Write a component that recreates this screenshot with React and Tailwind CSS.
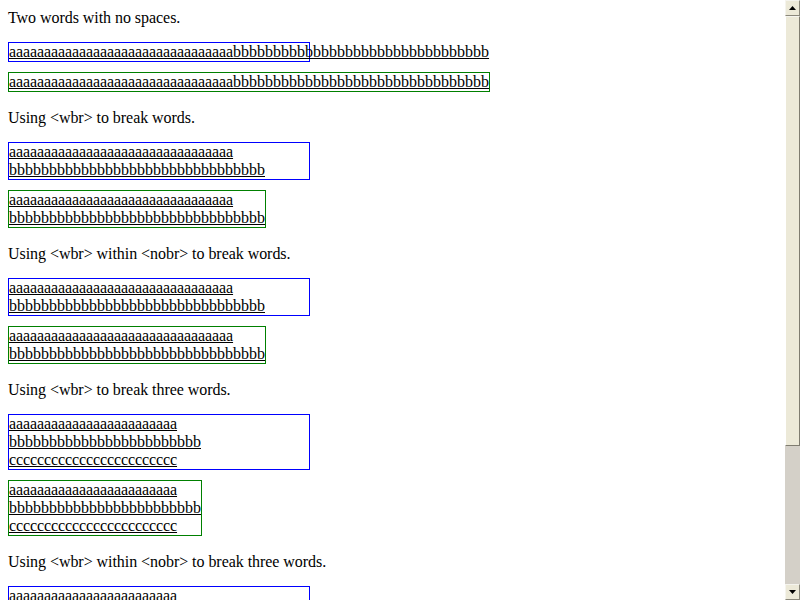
import React from "react";

const A = (n) => "a".repeat(n);
const B = (n) => "b".repeat(n);
const C = (n) => "c".repeat(n);

function Ln({ children, narrow }) {
  return (
    <div className="whitespace-nowrap">
      <span className={"underline decoration-black " + (narrow ? "tracking-[-0.1px]" : "")}>{children}</span>
    </div>
  );
}

function TwoLine({ border }) {
  return (
    <div className={border}>
      <Ln narrow>{A(32)}</Ln>
      <Ln>{B(32)}</Ln>
    </div>
  );
}

function ThreeLine({ border }) {
  return (
    <div className={border}>
      <Ln narrow>{A(24)}</Ln>
      <Ln>{B(24)}</Ln>
      <Ln narrow>{C(24)}</Ln>
    </div>
  );
}

function Section({ title, children, first }) {
  return (
    <div className={first ? "" : "mt-4"}>
      <div className="whitespace-nowrap pt-px tracking-[-0.05px]">{title}</div>
      {children}
    </div>
  );
}

function Scrollbar() {
  return (
    <div className="flex h-[600px] w-[15px] shrink-0 flex-col bg-[#d4d0c8]">
      <div className="flex h-[16px] items-center justify-center border-t border-l border-r border-b border-t-[#f5f4ee] border-l-[#f5f4ee] border-r-[#8a877b] border-b-[#8a877b] bg-[#ece9d8]">
        <svg width="7" height="4" viewBox="0 0 7 4">
          <path d="M3.5 0 L7 4 L0 4 Z" fill="#000" />
        </svg>
      </div>
      <div className="h-[430px] border-t border-l border-r border-b border-t-[#f5f4ee] border-l-white border-r-[#7f7c70] border-b-[#7f7c70] bg-[#ece9d8]" />
      <div className="flex-1" />
      <div className="flex h-[16px] items-center justify-center border-t border-l border-r border-b border-t-[#f5f4ee] border-l-[#f5f4ee] border-r-[#8a877b] border-b-[#8a877b] bg-[#ece9d8]">
        <svg width="7" height="4" viewBox="0 0 7 4">
          <path d="M0 0 L7 0 L3.5 4 Z" fill="#000" />
        </svg>
      </div>
    </div>
  );
}

export default function App() {
  const blue = "mt-[15px] w-[302px] border border-[#0000ff]";
  const green = "mt-[10px] w-fit border border-[#008000]";
  return (
    <div className="flex h-[600px] w-[800px] overflow-hidden bg-white">
      <div
        className="min-w-0 flex-1 overflow-hidden p-2 text-[16px] leading-[18px] text-black"
        style={{ fontFamily: '"Liberation Serif", "Times New Roman", serif' }}
      >
        <Section title="Two words with no spaces." first>
          <div className={blue}>
            <div className="whitespace-nowrap">
              <span className="underline decoration-black">
                <span className="tracking-[-0.1px]">{A(32)}</span>
                {B(32)}
              </span>
            </div>
          </div>
          <div className={green}>
            <div className="whitespace-nowrap">
              <span className="underline decoration-black">
                <span className="tracking-[-0.1px]">{A(32)}</span>
                {B(32)}
              </span>
            </div>
          </div>
        </Section>
        <Section title="Using <wbr> to break words.">
          <TwoLine border={blue} />
          <TwoLine border={green} />
        </Section>
        <Section title="Using <wbr> within <nobr> to break words.">
          <TwoLine border={blue} />
          <TwoLine border={green} />
        </Section>
        <Section title="Using <wbr> to break three words.">
          <ThreeLine border={blue} />
          <ThreeLine border={green} />
        </Section>
        <Section title="Using <wbr> within <nobr> to break three words.">
          <ThreeLine border={blue} />
          <ThreeLine border={green} />
        </Section>
      </div>
      <Scrollbar />
    </div>
  );
}
